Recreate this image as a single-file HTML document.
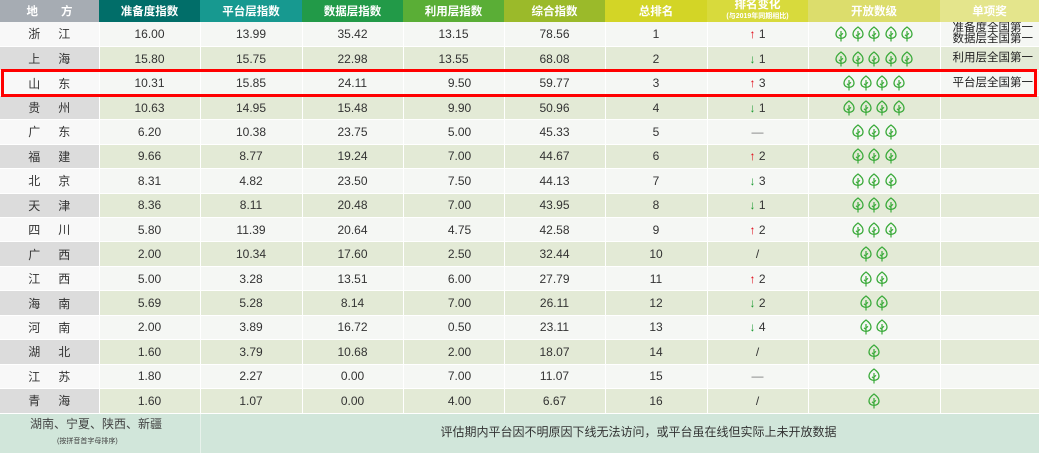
<!DOCTYPE html>
<html><head><meta charset="utf-8">
<style>
*{margin:0;padding:0;box-sizing:border-box}
body{width:1039px;height:453px;overflow:hidden;background:#fff;font-family:"Liberation Sans","Noto Sans CJK SC",sans-serif;font-size:12px;color:#333;position:relative}
table{border-collapse:collapse;table-layout:fixed;width:1039px;position:absolute;left:0;top:0}
td,th{text-align:center;vertical-align:middle;padding:0;white-space:nowrap;overflow:hidden}
th{height:22px;color:#fff;font-weight:bold;font-size:11.5px}
tr.r td{height:24.45px;border-right:1px solid #fff;border-bottom:1px solid #fff}
tr.o td{background:#f5f7f4}
tr.o td:first-child{background:#f8f8f8}
tr.e td{background:#e3ead6}
tr.e td:first-child{background:#dcdcdc}
.nm span{display:inline-block;width:30px}
.up{color:#e00010;font-weight:bold}
.dn{color:#1a9a30;font-weight:bold}
.lv{display:inline-flex;gap:4.5px;vertical-align:middle}
.lv svg{width:12px;height:16px}
.aw{text-align:left;padding-left:12px!important;font-size:11.5px;line-height:11px;color:#222}
.foot td{height:40px;background:#d1e6da;border-right:1px solid #e8f2ec}
.box{position:absolute;left:1px;top:69px;width:1036px;height:28px;border:3px solid #f00}
</style></head><body>
<svg width="0" height="0" style="position:absolute">
<defs><symbol id="lf" viewBox="0 0 12 16"><path d="M6 1 C9.5 3.5 11 6 11 8 C11 10.8 8.8 12.3 6 12.3 C3.2 12.3 1 10.8 1 8 C1 6 2.5 3.5 6 1 Z" fill="none" stroke="#3aaa3a" stroke-width="1.3"/><path d="M6 5 V15.5 M6 9 L8 7.3 M6 10.5 L4 8.8" fill="none" stroke="#3aaa3a" stroke-width="1.2"/></symbol></defs></svg>
<table>
<colgroup><col style="width:99px"><col style="width:101px"><col style="width:102px"><col style="width:101px"><col style="width:101px"><col style="width:101px"><col style="width:102px"><col style="width:101px"><col style="width:132px"><col style="width:99px"></colgroup>
<tr>
<th style="background:#a6acb3">地　　方</th>
<th style="background:#016e69">准备度指数</th>
<th style="background:#179990">平台层指数</th>
<th style="background:#229a48">数据层指数</th>
<th style="background:#5aae36">利用层指数</th>
<th style="background:#9bba2a">综合指数</th>
<th style="background:#d3d526">总排名</th>
<th style="background:#d8da3c;line-height:10px">排名变化<br><span style="font-size:7px">(与2019年同期相比)</span></th>
<th style="background:#dcdd6c">开放数级</th>
<th style="background:#e4e58c">单项奖</th>
</tr>
<tbody id="b"></tbody>
<tr class="foot"><td colspan="2" style="text-align:left;padding-left:30px;line-height:15px;color:#444">湖南、宁夏、陕西、新疆<br><span style="font-size:7px;padding-left:27px">(按拼音首字母排序)</span></td><td colspan="8" style="text-align:left;padding-left:240px;padding-bottom:4px;color:#333">评估期内平台因不明原因下线无法访问，或平台虽在线但实际上未开放数据</td></tr>
</table>
<div class="box"></div>
<script>
var d=[["浙","江","16.00","13.99","35.42","13.15","78.56",1,"u1",5,"准备度全国第一<br>数据层全国第一"],
["上","海","15.80","15.75","22.98","13.55","68.08",2,"d1",5,"利用层全国第一"],
["山","东","10.31","15.85","24.11","9.50","59.77",3,"u3",4,"平台层全国第一"],
["贵","州","10.63","14.95","15.48","9.90","50.96",4,"d1",4,""],
["广","东","6.20","10.38","23.75","5.00","45.33",5,"-",3,""],
["福","建","9.66","8.77","19.24","7.00","44.67",6,"u2",3,""],
["北","京","8.31","4.82","23.50","7.50","44.13",7,"d3",3,""],
["天","津","8.36","8.11","20.48","7.00","43.95",8,"d1",3,""],
["四","川","5.80","11.39","20.64","4.75","42.58",9,"u2",3,""],
["广","西","2.00","10.34","17.60","2.50","32.44",10,"/",2,""],
["江","西","5.00","3.28","13.51","6.00","27.79",11,"u2",2,""],
["海","南","5.69","5.28","8.14","7.00","26.11",12,"d2",2,""],
["河","南","2.00","3.89","16.72","0.50","23.11",13,"d4",2,""],
["湖","北","1.60","3.79","10.68","2.00","18.07",14,"/",1,""],
["江","苏","1.80","2.27","0.00","7.00","11.07",15,"-",1,""],
["青","海","1.60","1.07","0.00","4.00","6.67",16,"/",1,""]];
var h="";
d.forEach(function(r,i){
var c=r[8],ch;
if(c=="-")ch='<span style="color:#777">—</span>';else if(c=="/")ch='/';
else if(c[0]=="u")ch='<span class="up">↑</span> '+c[1];else ch='<span class="dn">↓</span> '+c[1];
var lv='<span class="lv">';for(var k=0;k<r[9];k++)lv+='<svg><use href="#lf"/></svg>';lv+='</span>';
h+='<tr class="r '+(i%2?'e':'o')+'"><td class="nm"><span>'+r[0]+'</span><span>'+r[1]+'</span></td><td>'+r[2]+'</td><td>'+r[3]+'</td><td>'+r[4]+'</td><td style="padding-left:'+(r[5].length<5?12:0)+'px">'+r[5]+'</td><td>'+r[6]+'</td><td>'+r[7]+'</td><td>'+ch+'</td><td>'+lv+'</td><td class="aw">'+r[10]+'</td></tr>';
});
document.getElementById("b").innerHTML=h;
</script>
</body></html>
